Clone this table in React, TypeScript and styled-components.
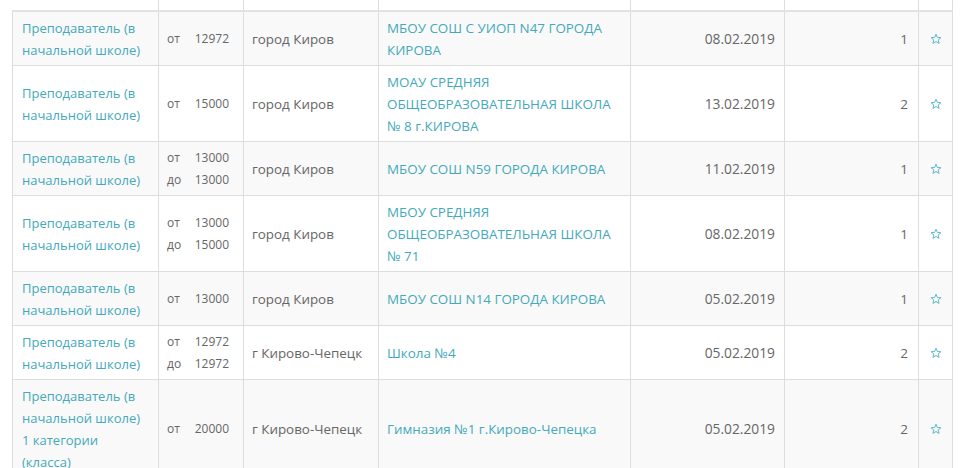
import React from "react";
import styled, { createGlobalStyle } from "styled-components";

const Global = createGlobalStyle`
  html, body { margin: 0; padding: 0; background: #fff; }
  body { font-family: "Open Sans", "Liberation Sans", sans-serif; }
`;

const Page = styled.div`
  padding: 0 14px 0 12px;
  width: 966px;
  box-sizing: border-box;
  height: 468px;
  overflow: hidden;
`;

const Table = styled.table`
  width: 940px;
  border-collapse: collapse;
  table-layout: fixed;
  font-size: 13px;
  color: #666;
`;

const HeadRow = styled.tr`
  height: 11px;
  border-bottom: 2px solid #e2e2e2;
`;

const HeadCell = styled.th<{ $first?: boolean }>`
  padding: 0;
  border-left: 1px solid ${(p) => (p.$first ? "transparent" : "#dddddd")};
  border-right: 1px solid #dddddd;
`;

const Row = styled.tr<{ $odd: boolean }>`
  background: ${(p) => (p.$odd ? "#f9f9f9" : "#ffffff")};
`;

const Cell = styled.td<{ $align?: string; $padL?: number; $padR?: number; $size?: number }>`
  border: 1px solid #dddddd;
  padding: 5px ${(p) => p.$padR ?? 8}px 4px ${(p) => p.$padL ?? 8}px;
  line-height: 22px;
  font-size: ${(p) => p.$size ?? 13}px;
  text-align: ${(p) => p.$align ?? "left"};
  vertical-align: middle;
  word-wrap: break-word;
`;

const Link = styled.a`
  color: #44a9ba;
  text-decoration: none;
`;

const Salary = styled.div`
  display: grid;
  grid-template-columns: 16px 1fr;
  column-gap: 4px;
  color: #666;
`;

const Num = styled.span`
  text-align: right;
`;

const Star = styled.svg`
  display: block;
  margin: 0 auto;
`;

type RowData = {
  title: string;
  from: string;
  to?: string;
  city: string;
  org: string;
  date: string;
  count: string;
};

const rows: RowData[] = [
  { title: "Преподаватель (в начальной школе)", from: "12972", city: "город Киров", org: "МБОУ СОШ С УИОП N47 ГОРОДА КИРОВА", date: "08.02.2019", count: "1" },
  { title: "Преподаватель (в начальной школе)", from: "15000", city: "город Киров", org: "МОАУ СРЕДНЯЯ ОБЩЕОБРАЗОВАТЕЛЬНАЯ ШКОЛА № 8 г.КИРОВА", date: "13.02.2019", count: "2" },
  { title: "Преподаватель (в начальной школе)", from: "13000", to: "13000", city: "город Киров", org: "МБОУ СОШ N59 ГОРОДА КИРОВА", date: "11.02.2019", count: "1" },
  { title: "Преподаватель (в начальной школе)", from: "13000", to: "15000", city: "город Киров", org: "МБОУ СРЕДНЯЯ ОБЩЕОБРАЗОВАТЕЛЬНАЯ ШКОЛА № 71", date: "08.02.2019", count: "1" },
  { title: "Преподаватель (в начальной школе)", from: "13000", city: "город Киров", org: "МБОУ СОШ N14 ГОРОДА КИРОВА", date: "05.02.2019", count: "1" },
  { title: "Преподаватель (в начальной школе)", from: "12972", to: "12972", city: "г Кирово-Чепецк", org: "Школа №4", date: "05.02.2019", count: "2" },
  { title: "Преподаватель (в начальной школе) 1 категории (класса)", from: "20000", city: "г Кирово-Чепецк", org: "Гимназия №1 г.Кирово-Чепецка", date: "05.02.2019", count: "2" },
];

const StarIcon = () => (
  <Star width="12" height="12" viewBox="0 0 24 24" fill="none" stroke="#5cb9c7" strokeWidth="2" strokeLinejoin="round">
    <polygon points="12,2.5 14.8,9 21.8,9.4 16.4,13.9 18.1,20.8 12,17 5.9,20.8 7.6,13.9 2.2,9.4 9.2,9" />
  </Star>
);

const widths = [146, 85, 135, 252, 154, 134, 34];

export default function App() {
  return (
    <Page>
      <Global />
      <Table>
        <colgroup>
          {widths.map((w, i) => (
            <col key={i} style={{ width: w }} />
          ))}
        </colgroup>
        <thead>
          <HeadRow>
            {widths.map((_, i) => (
              <HeadCell key={i} $first={i === 0} />
            ))}
          </HeadRow>
        </thead>
        <tbody>
          {rows.map((r, i) => (
            <Row key={i} $odd={i % 2 === 0}>
              <Cell $padL={9} $padR={11}>
                <Link href="#">{r.title}</Link>
              </Cell>
              <Cell $size={12} $padR={14}>
                <Salary>
                  <span>от</span>
                  <Num>{r.from}</Num>
                  {r.to && (
                    <>
                      <span>до</span>
                      <Num>{r.to}</Num>
                    </>
                  )}
                </Salary>
              </Cell>
              <Cell $size={13.4}>{r.city}</Cell>
              <Cell $size={13.4}>
                <Link href="#">{r.org}</Link>
              </Cell>
              <Cell $align="right" $padR={9} $size={13.8}>
                {r.date}
              </Cell>
              <Cell $align="right" $padR={10} $size={13.5}>
                {r.count}
              </Cell>
              <Cell $padL={0} $padR={0}>
                <StarIcon />
              </Cell>
            </Row>
          ))}
        </tbody>
      </Table>
    </Page>
  );
}
